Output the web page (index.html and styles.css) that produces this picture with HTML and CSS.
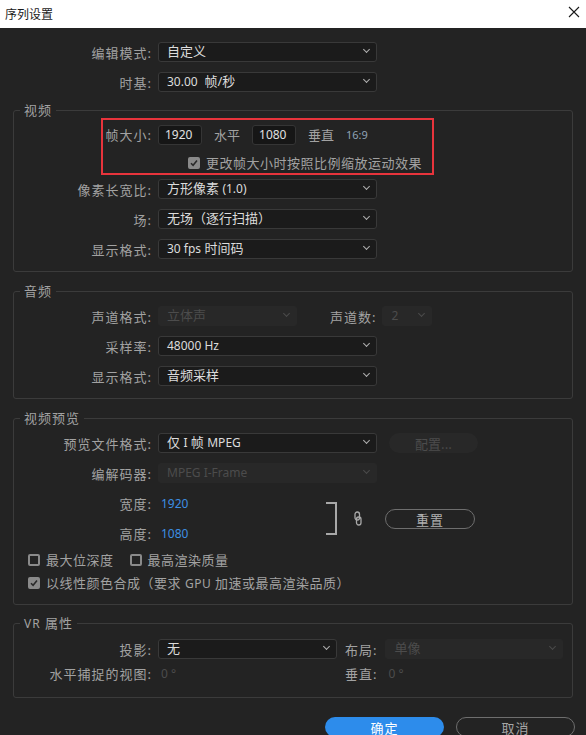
FILE: index.html
```html
<!DOCTYPE html>
<html>
<head>
    <meta charset="utf-8">
    <link rel="stylesheet" href="styles.css">
</head>
<body>
    <div class="dialog">
        <!-- Title bar -->
        <div class="titlebar">
            <span class="title">序列设置</span>
            <svg class="close" width="12" height="12" viewBox="0 0 12 12">
                <path d="M1 1L11 11M11 1L1 11" stroke="#1a1a1a" stroke-width="1.1"/>
            </svg>
        </div>

        <!-- General -->
        <div class="top">
            <div class="row">
                <span class="lbl">编辑模式:</span>
                <div class="select w-wide">自定义</div>
            </div>
            <div class="row">
                <span class="lbl">时基:</span>
                <div class="select w-wide"><span class="num-text">30.00</span>&nbsp; 帧/秒</div>
            </div>
        </div>

        <!-- Video -->
        <fieldset class="group group-video">
            <legend>视频</legend>
            <div class="frame-block">
                <div class="highlight"></div>
                <div class="row row-frame">
                    <span class="lbl">帧大小:</span>
                    <div class="field">1920</div>
                    <span class="unit">水平</span>
                    <div class="field">1080</div>
                    <span class="unit">垂直</span>
                    <span class="ratio">16:9</span>
                </div>
                <div class="check-row check-scale">
                    <span class="cb checked">
                        <svg width="8" height="8" viewBox="0 0 8 8"><path d="M1 4.2L3.1 6.3L7 1.6" fill="none" stroke="#2a2a2a" stroke-width="1.6"/></svg>
                    </span>
                    <span class="check-text">更改帧大小时按照比例缩放运动效果</span>
                </div>
            </div>
            <div class="row">
                <span class="lbl">像素长宽比:</span>
                <div class="select w-wide">方形像素 <span class="num-text">(1.0)</span></div>
            </div>
            <div class="row">
                <span class="lbl">场:</span>
                <div class="select w-wide">无场（逐行扫描）</div>
            </div>
            <div class="row">
                <span class="lbl">显示格式:</span>
                <div class="select w-wide"><span class="num-text">30 fps</span> 时间码</div>
            </div>
        </fieldset>

        <!-- Audio -->
        <fieldset class="group group-audio">
            <legend>音频</legend>
            <div class="row">
                <span class="lbl">声道格式:</span>
                <div class="select disabled w-channel">立体声</div>
                <span class="lbl-inline lbl-count">声道数:</span>
                <div class="select disabled w-count"><span class="num-text">2</span></div>
            </div>
            <div class="row">
                <span class="lbl">采样率:</span>
                <div class="select w-wide"><span class="num-text">48000 Hz</span></div>
            </div>
            <div class="row">
                <span class="lbl">显示格式:</span>
                <div class="select w-wide">音频采样</div>
            </div>
        </fieldset>

        <!-- Video preview -->
        <fieldset class="group group-preview">
            <legend>视频预览</legend>
            <div class="row">
                <span class="lbl">预览文件格式:</span>
                <div class="select w-wide">仅 <span class="num-text">I</span> 帧 <span class="num-text">MPEG</span></div>
                <button class="pill pill-disabled" type="button">配置...</button>
            </div>
            <div class="row">
                <span class="lbl">编解码器:</span>
                <div class="select disabled w-wide"><span class="num-text">MPEG I-Frame</span></div>
            </div>
            <div class="dims">
                <div class="dims-col">
                    <div class="row">
                        <span class="lbl">宽度:</span>
                        <span class="dim-value">1920</span>
                    </div>
                    <div class="row">
                        <span class="lbl">高度:</span>
                        <span class="dim-value">1080</span>
                    </div>
                </div>
                <div class="bracket"></div>
                <svg class="link" width="8" height="15" viewBox="0 0 8 15">
                    <rect x="1" y="1" width="4.5" height="8" rx="2.2" fill="none" stroke="#a8a8a8" stroke-width="1.3"/>
                    <rect x="2.5" y="6" width="4.5" height="8" rx="2.2" fill="none" stroke="#a8a8a8" stroke-width="1.3"/>
                </svg>
                <button class="pill pill-reset" type="button">重置</button>
            </div>
            <div class="check-row">
                <span class="cb"></span>
                <span class="check-text">最大位深度</span>
                <span class="cb cb-next"></span>
                <span class="check-text">最高渲染质量</span>
            </div>
            <div class="check-row">
                <span class="cb checked">
                    <svg width="8" height="8" viewBox="0 0 8 8"><path d="M1 4.2L3.1 6.3L7 1.6" fill="none" stroke="#2a2a2a" stroke-width="1.6"/></svg>
                </span>
                <span class="check-text">以线性颜色合成（要求 <span class="num-text">GPU</span> 加速或最高渲染品质）</span>
            </div>
        </fieldset>

        <!-- VR -->
        <fieldset class="group group-vr">
            <legend><span class="num-text">VR</span> 属性</legend>
            <div class="row">
                <span class="lbl">投影:</span>
                <div class="select w-proj">无</div>
                <span class="lbl-inline">布局:</span>
                <div class="select disabled w-layout">单像</div>
            </div>
            <div class="row row-short">
                <span class="lbl">水平捕捉的视图:</span>
                <span class="dim-muted">0 °</span>
                <span class="lbl-inline">垂直:</span>
                <span class="dim-muted">0 °</span>
            </div>
        </fieldset>

        <div class="actions">
            <button class="btn btn-primary" type="button">确定</button>
            <button class="btn btn-outline" type="button">取消</button>
        </div>
    </div>
</body>
</html>
```

FILE: styles.css
```css
body {
    margin: 0;
    background-color: #232323;
    font-family: "Noto Sans", "Noto Sans CJK SC", sans-serif;
    font-size: 13px;
    color: #a2a2a2;
}

.dialog {
    width: 586px;
    height: 735px;
    overflow: hidden;
}

.titlebar {
    height: 28px;
    background-color: #ffffff;
    display: flex;
    align-items: center;
    justify-content: space-between;
    padding: 0 6px 0 5px;
}

.title {
    font-size: 12px;
    color: #1a1a1a;
    font-family: "Noto Sans CJK SC", sans-serif;
    margin-top: -2px;
}

.close {
    margin-top: -5px;
}

.top {
    padding: 9px 14px 0;
    margin-bottom: 5px;
}

.row {
    display: flex;
    align-items: center;
    height: 30px;
}

.lbl {
    width: 138px;
    margin-right: 6px;
    flex: none;
    text-align: right;
    letter-spacing: 1px;
    white-space: nowrap;
    color: #a2a2a2;
}

.lbl-inline {
    margin-left: 8px;
    margin-right: 8px;
    letter-spacing: 1px;
    white-space: nowrap;
}

.lbl-count {
    margin-left: 33px;
    margin-right: 6px;
}

.num-text {
    font-family: "Noto Sans", sans-serif;
    font-size: 12px;
}

.select {
    position: relative;
    height: 20px;
    box-sizing: border-box;
    background-color: #1b1b1b;
    border: 1px solid #393939;
    border-radius: 3px;
    padding-left: 8px;
    color: #dcdcdc;
    line-height: 17px;
    white-space: nowrap;
    flex: none;
}

.select::after {
    content: "";
    position: absolute;
    right: 7px;
    top: 4px;
    width: 4px;
    height: 4px;
    border-right: 1px solid #b0b0b0;
    border-bottom: 1px solid #b0b0b0;
    transform: rotate(45deg);
}

.select.disabled {
    background-color: #282828;
    border-color: #282828;
    color: #4c4c4c;
}

.select.disabled::after {
    border-color: #4a4a4a;
}

.w-wide { width: 219px; }
.w-channel { width: 139px; }
.w-count { width: 50px; }
.w-proj { width: 179px; }
.w-layout { width: 178px; }

/* Groups */
.group {
    position: relative;
    margin: 0 13px;
    padding: 0;
    border: 1px solid #3b3b3b;
    border-radius: 3px;
    min-width: 0;
}

.group legend {
    margin-left: 6px;
    padding: 0 4px;
    font-size: 13px;
    line-height: 16px;
    color: #a2a2a2;
    letter-spacing: 1px;
}

.group-video {
    padding-bottom: 7px;
}

.group-audio {
    margin-top: 11px;
    padding: 2px 0 7px;
}

.group-preview {
    margin-top: 11px;
    padding: 2px 0 10px;
}

.group-vr {
    margin-top: 10px;
    padding: 2px 0 15px;
}

/* Frame size */
.frame-block {
    position: relative;
}

.highlight {
    position: absolute;
    left: 87px;
    top: 0;
    width: 333px;
    height: 57px;
    box-sizing: border-box;
    border: 2px solid #e8343c;
}

.row-frame {
    height: 33px;
}

.field {
    width: 44px;
    height: 20px;
    box-sizing: border-box;
    background-color: #161616;
    border: 1px solid #353535;
    border-radius: 3px;
    padding-left: 6px;
    font-size: 12px;
    line-height: 18px;
    color: #e0e0e0;
    flex: none;
}

.unit {
    margin: 0 12px;
}

.ratio {
    font-size: 11px;
    color: #8fa2b5;
}

/* Checkboxes */
.check-row {
    display: flex;
    align-items: center;
    height: 23px;
    padding-left: 14px;
}

.check-scale {
    padding-left: 174px;
}

.cb {
    width: 12px;
    height: 12px;
    box-sizing: border-box;
    border: 2px solid #8a8a8a;
    border-radius: 2px;
    margin-right: 6px;
    flex: none;
    display: flex;
    align-items: center;
    justify-content: center;
}

.cb.checked {
    background-color: #8a8a8a;
}

.cb-next {
    margin-left: 16px;
}

.check-text {
    letter-spacing: 0.5px;
    white-space: nowrap;
}

/* Preview dims */
.dims {
    display: flex;
    align-items: center;
}

.dims-col {
    width: 312px;
    flex: none;
}

.dim-value {
    color: #3d8fe2;
    font-size: 12px;
    padding-left: 3px;
}

.dim-muted {
    width: 176px;
    padding-left: 3px;
    font-size: 12px;
    color: #4c4c4c;
    flex: none;
}

.row-short {
    height: 18px;
}

.bracket {
    width: 9px;
    height: 29px;
    border: 2px solid #a8a8a8;
    border-left: none;
    margin-top: 1px;
}

.link {
    margin-left: 17px;
}

.pill {
    height: 20px;
    box-sizing: border-box;
    border-radius: 10px;
    font-family: "Noto Sans CJK SC", sans-serif;
    font-size: 13px;
    padding: 0;
}

.pill-disabled {
    width: 89px;
    margin-left: 12px;
    background-color: #282828;
    border: none;
    color: #4c4c4c;
}

.pill-reset {
    width: 90px;
    margin-left: 23px;
    margin-top: 1px;
    background-color: transparent;
    border: 1px solid #6e6e6e;
    color: #b0b0b0;
    letter-spacing: 1px;
}

/* Footer buttons */
.actions {
    display: flex;
    justify-content: flex-end;
    gap: 12px;
    padding: 19px 11px 0 0;
}

.btn {
    width: 119px;
    height: 20px;
    border-radius: 10px;
    font-family: "Noto Sans CJK SC", sans-serif;
    font-size: 13px;
    padding: 0;
    letter-spacing: 1px;
}

.btn-primary {
    background-color: #2d8ceb;
    border: none;
    color: #ffffff;
}

.btn-outline {
    background-color: transparent;
    border: 1px solid #6e6e6e;
    color: #a6a6a6;
}
```
